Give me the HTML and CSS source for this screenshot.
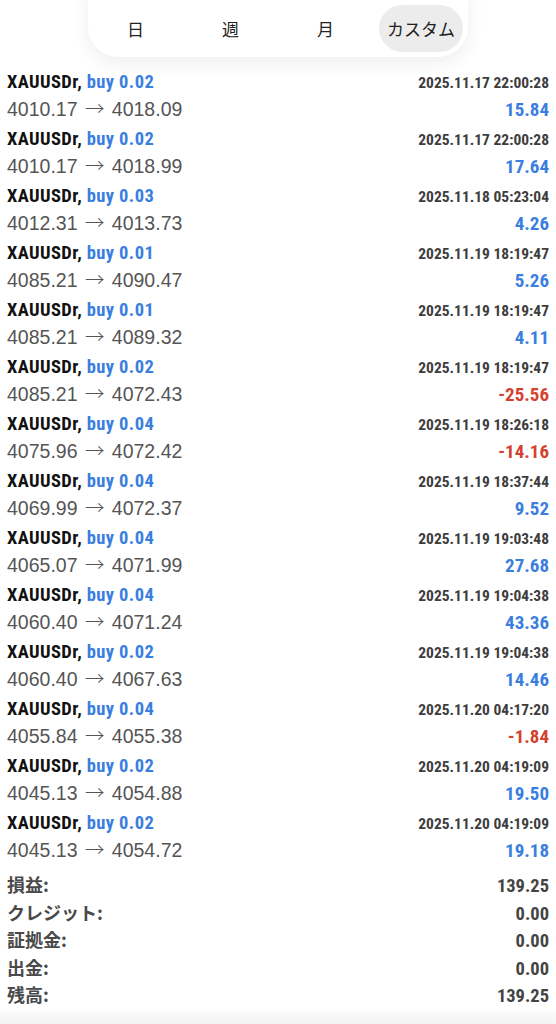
FILE: index.html
```html
<!DOCTYPE html>
<html lang="ja">
<head>
    <meta charset="UTF-8">
    <meta name="viewport" content="width=device-width, initial-scale=1.0">
    <title>履歴</title>
    <link rel="stylesheet" href="styles.css">
</head>
<body>
    <div id="app">
        <div class="period-tabs">
            <div class="tab">日</div>
            <div class="tab">週</div>
            <div class="tab">月</div>
            <div class="tab active"><span>カスタム</span></div>
        </div>

        <ul id="deals-list"></ul>

        <div class="summary">
            <div class="summary-row"><span>損益:</span><span class="num">139.25</span></div>
            <div class="summary-row"><span>クレジット:</span><span class="num">0.00</span></div>
            <div class="summary-row"><span>証拠金:</span><span class="num">0.00</span></div>
            <div class="summary-row"><span>出金:</span><span class="num">0.00</span></div>
            <div class="summary-row"><span>残高:</span><span class="num">139.25</span></div>
        </div>
        <div class="bottom-bar"></div>
    </div>

    <script>
        // 取引履歴データ
        const deals = [
            ['0.02', '4010.17', '4018.09', '2025.11.17 22:00:28', '15.84'],
            ['0.02', '4010.17', '4018.99', '2025.11.17 22:00:28', '17.64'],
            ['0.03', '4012.31', '4013.73', '2025.11.18 05:23:04', '4.26'],
            ['0.01', '4085.21', '4090.47', '2025.11.19 18:19:47', '5.26'],
            ['0.01', '4085.21', '4089.32', '2025.11.19 18:19:47', '4.11'],
            ['0.02', '4085.21', '4072.43', '2025.11.19 18:19:47', '-25.56'],
            ['0.04', '4075.96', '4072.42', '2025.11.19 18:26:18', '-14.16'],
            ['0.04', '4069.99', '4072.37', '2025.11.19 18:37:44', '9.52'],
            ['0.04', '4065.07', '4071.99', '2025.11.19 19:03:48', '27.68'],
            ['0.04', '4060.40', '4071.24', '2025.11.19 19:04:38', '43.36'],
            ['0.02', '4060.40', '4067.63', '2025.11.19 19:04:38', '14.46'],
            ['0.04', '4055.84', '4055.38', '2025.11.20 04:17:20', '-1.84'],
            ['0.02', '4045.13', '4054.88', '2025.11.20 04:19:09', '19.50'],
            ['0.02', '4045.13', '4054.72', '2025.11.20 04:19:09', '19.18']
        ];

        const list = document.getElementById('deals-list');
        deals.forEach(([volume, open, close, time, profit]) => {
            const item = document.createElement('li');
            const cls = profit.startsWith('-') ? 'profit loss' : 'profit';
            item.innerHTML = `
                <div class="line">
                    <span class="symbol">XAUUSDr, <span class="side">buy ${volume}</span></span>
                    <span class="time">${time}</span>
                </div>
                <div class="line">
                    <span class="prices">${open} <span class="arrow">→</span> ${close}</span>
                    <span class="${cls}">${profit}</span>
                </div>
            `;
            list.appendChild(item);
        });
    </script>
</body>
</html>
```

FILE: styles.css
```css
/* 共通 */
body {
    margin: 0;
    padding: 0;
    background: #fff;
    font-family: "Liberation Sans", Roboto, "Noto Sans CJK JP", sans-serif;
    color: #111;
    overflow: hidden;
}

/* 期間タブ */
.period-tabs {
    width: 380px;
    height: 69px;
    margin: -12px auto 0;
    padding-top: 12px;
    box-sizing: border-box;
    display: grid;
    grid-template-columns: repeat(4, 1fr);
    background: #fff;
    border-radius: 0 0 30px 30px;
    box-shadow: 0 6px 18px rgba(0, 0, 0, 0.07);
}

.tab {
    display: flex;
    align-items: center;
    justify-content: center;
    font-family: "Noto Sans CJK JP", sans-serif;
    font-size: 17px;
    color: #222;
}

.tab.active span {
    display: flex;
    align-items: center;
    justify-content: center;
    width: 84px;
    height: 47px;
    margin-left: 1px;
    border-radius: 24px;
    background: #ececec;
}

/* 取引リスト */
ul {
    list-style: none;
    margin: 12px 0 0;
    padding: 0 7px;
}

li {
    height: 57px;
}

.line {
    display: flex;
    justify-content: space-between;
    align-items: baseline;
    height: 26px;
    line-height: 26px;
}

.symbol,
.time,
.profit,
.num {
    font-family: "Liberation Sans Narrow", "Roboto Condensed", "Liberation Sans", sans-serif;
    font-weight: bold;
}

.symbol {
    font-size: 18.5px;
    letter-spacing: 0.4px;
    color: #111;
}

.side {
    color: #3a7ee0;
}

.time {
    font-size: 15.5px;
    color: #3d3d3d;
}

.prices {
    font-size: 19.5px;
    color: #555;
}

.arrow {
    margin: 0 2px;
    font-family: "Noto Sans CJK JP", sans-serif;
    font-weight: 300;
}

.profit {
    font-size: 19px;
    color: #3a7ee0;
}

.profit.loss {
    color: #d4412f;
}

/* 合計 */
.summary {
    padding: 4px 7px 0;
}

.summary-row {
    display: flex;
    justify-content: space-between;
    align-items: baseline;
    height: 27.5px;
    line-height: 27.5px;
    font-family: "Noto Sans CJK JP", sans-serif;
    font-weight: bold;
    font-size: 18px;
    color: #4a4a4a;
}

.summary-row .num {
    font-size: 18.5px;
    color: #444;
}

.bottom-bar {
    height: 20px;
    background: linear-gradient(#fcfcfc, #f1f1f1);
}
```
